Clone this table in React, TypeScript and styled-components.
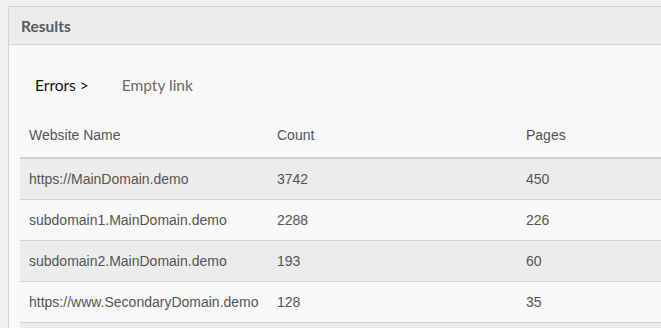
import React from "react";
import styled, { createGlobalStyle } from "styled-components";

const GlobalStyle = createGlobalStyle`
  html, body {
    margin: 0;
    padding: 0;
    background: #f0f0f0;
    overflow: hidden;
  }
`;

const Page = styled.div`
  padding: 6px 0 0 8px;
  width: 900px;
`;

const Panel = styled.section`
  border: 1px solid #d3d3d3;
  border-right: none;
  background: #f9f9f9;
`;

const PanelHeader = styled.div`
  height: 37px;
  display: flex;
  align-items: center;
  padding-left: 12px;
  background: #ececec;
  border-bottom: 1px solid #d3d3d3;
  font-family: Lato, "Liberation Sans", sans-serif;
  font-weight: 700;
  font-size: 15.5px;
  color: #5a5a5a;
`;

const PanelBody = styled.div`
  padding: 0 0 0 11px;
`;

const Breadcrumb = styled.nav`
  display: flex;
  align-items: center;
  height: 80px;
  padding-left: 15px;
  gap: 33px;
  font-family: Lato, "Liberation Sans", sans-serif;
  font-size: 15.5px;
`;

const Crumb = styled.span<{ $current?: boolean }>`
  color: ${({ $current }) => ($current ? "#6a6a6a" : "#111")};
`;

const Table = styled.table`
  border-collapse: collapse;
  table-layout: fixed;
  width: 760px;
  font-family: "Liberation Sans", Arial, sans-serif;
  font-size: 14px;
  color: #555;
`;

// widths are content widths; each cell adds 18px of horizontal padding
const HeadCell = styled.th<{ $width: number }>`
  text-align: left;
  font-weight: 400;
  line-height: 16px;
  vertical-align: top;
  padding: 2px 9px 14px;
  border-bottom: 2px solid #d0d0d0;
  width: ${({ $width }) => $width}px;
`;

const Row = styled.tr<{ $striped: boolean }>`
  background: ${({ $striped }) => ($striped ? "#ececec" : "#f9f9f9")};
  border-bottom: 1px solid #d3d3d3;
`;

const Cell = styled.td`
  height: 40px;
  padding: 0 9px;
  white-space: nowrap;
`;

const rows = [
  ["https://MainDomain.demo", "3742", "450"],
  ["subdomain1.MainDomain.demo", "2288", "226"],
  ["subdomain2.MainDomain.demo", "193", "60"],
  ["https://www.SecondaryDomain.demo", "128", "35"],
  ["", "", ""],
];

export default function App() {
  return (
    <>
      <GlobalStyle />
      <Page>
        <Panel>
          <PanelHeader>Results</PanelHeader>
          <PanelBody>
            <Breadcrumb>
              <Crumb>Errors &gt;</Crumb>
              <Crumb $current>Empty link</Crumb>
            </Breadcrumb>
            <Table>
              <thead>
                <tr>
                  <HeadCell $width={230}>Website Name</HeadCell>
                  <HeadCell $width={231}>Count</HeadCell>
                  <HeadCell $width={245}>Pages</HeadCell>
                </tr>
              </thead>
              <tbody>
                {rows.map((r, i) => (
                  <Row key={i} $striped={i % 2 === 0}>
                    <Cell>{r[0]}</Cell>
                    <Cell>{r[1]}</Cell>
                    <Cell>{r[2]}</Cell>
                  </Row>
                ))}
              </tbody>
            </Table>
          </PanelBody>
        </Panel>
      </Page>
    </>
  );
}
